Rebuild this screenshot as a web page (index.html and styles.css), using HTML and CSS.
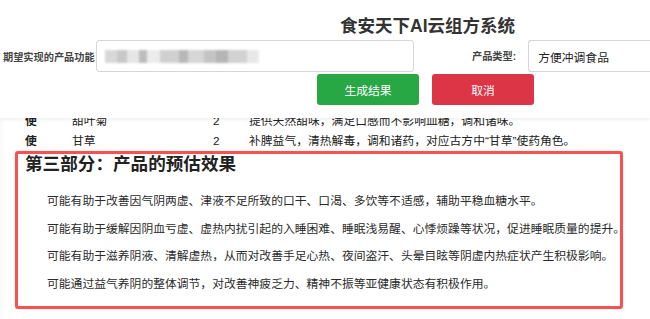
FILE: index.html
```html
<!DOCTYPE html>
<html lang="zh">
<head>
  <meta charset="utf-8"/>
  <title>食安天下AI云组方系统</title>
  <link rel="stylesheet" href="styles.css">
</head>
<body>

<div class="header">
  <h1 class="title">食安天下AI云组方系统</h1>
  <form class="query" onsubmit="event.preventDefault();">
    <label class="field-label" for="func">期望实现的产品功能</label>
    <div class="text-input" id="func"><span class="blurred"></span></div>
    <label class="field-label type-label" for="ptype">产品类型:</label>
    <div class="select-box" id="ptype">方便冲调食品</div>
  </form>
  <div class="actions">
    <button class="btn btn-go" type="button">生成结果</button>
    <button class="btn btn-cancel" type="button">取消</button>
  </div>
</div>

<div class="content">
  <div class="card">
    <table class="recipe">
      <tr><td class="role">使</td><td class="herb">甜叶菊</td><td class="qty">2</td><td>提供天然甜味，满足口感而不影响血糖，调和诸味。</td></tr>
      <tr><td class="role">使</td><td class="herb">甘草</td><td class="qty">2</td><td>补脾益气，清热解毒，调和诸药，对应古方中“甘草”使药角色。</td></tr>
    </table>

    <div class="effects">
      <h2>第三部分：产品的预估效果</h2>
      <p>可能有助于改善因气阴两虚、津液不足所致的口干、口渴、多饮等不适感，辅助平稳血糖水平。</p>
      <p>可能有助于缓解因阴血亏虚、虚热内扰引起的入睡困难、睡眠浅易醒、心悸烦躁等状况，促进睡眠质量的提升。</p>
      <p>可能有助于滋养阴液、清解虚热，从而对改善手足心热、夜间盗汗、头晕目眩等阴虚内热症状产生积极影响。</p>
      <p>可能通过益气养阴的整体调节，对改善神疲乏力、精神不振等亚健康状态有积极作用。</p>
    </div>
  </div>
</div>

</body>
</html>
```

FILE: styles.css
```css
body {
  margin: 0;
  background: #fafafa;
  font-family: 'Liberation Sans', 'Noto Sans CJK SC', sans-serif;
  color: #333;
  overflow: hidden;
}
.header {
  position: relative;
  z-index: 2;
  height: 118px;
  background: #fff;
  box-shadow: 0 2px 3px rgba(0, 0, 0, 0.06);
}
.title {
  margin: 0;
  padding: 13px 0 0 340px;
  height: 39px;
  box-sizing: border-box;
  font-size: 17.5px;
  font-weight: bold;
  color: #333;
  line-height: 26px;
}
.query {
  display: flex;
  align-items: center;
  height: 34px;
  padding-left: 3px;
}
.field-label {
  font-size: 10.2px;
  font-weight: bold;
  color: #444;
  width: 93px;
}
.type-label {
  width: auto;
  margin: -2px 12px 0 58px;
}
.text-input,
.select-box {
  height: 32px;
  box-sizing: border-box;
  border: 1px solid #d6d6d6;
  border-radius: 3px;
  background: #fff;
  display: flex;
  align-items: center;
}
.text-input {
  width: 318px;
  padding-left: 8px;
}
.blurred {
  display: block;
  width: 154px;
  height: 13px;
  background: linear-gradient(90deg, #d8d8d8 0 8%, #c8c8c8 8% 14%, #e6e6e6 14% 22%, #bdbdbd 22% 27%, #ececec 27% 36%, #d0d0d0 36% 48%, #b8b8b8 48% 54%, #d6d6d6 54% 64%, #c4c4c4 64% 72%, #b5b5b5 72% 80%, #d2d2d2 80% 92%, #e8e8e8 92% 100%);
  filter: blur(1.2px);
}
.select-box {
  flex: 1;
  margin-right: -4px;
  padding-left: 9px;
  font-size: 11.8px;
  color: #222;
  border-right: none;
}
.actions {
  display: flex;
  gap: 13px;
  padding: 1px 0 0 317px;
}
.btn {
  width: 102px;
  height: 31px;
  border: none;
  border-radius: 3px;
  color: #fff;
  font-family: inherit;
  font-size: 11.8px;
}
.btn-go {
  background: #28a745;
}
.btn-cancel {
  background: #dc3545;
}
.content {
  margin-top: -12px;
  padding-left: 3px;
}
.card {
  background: #fff;
  border-radius: 6px;
  padding: 5px 0 20px 0;
}
.recipe {
  border-collapse: collapse;
  margin-left: 22px;
  font-size: 11.8px;
  color: #222;
}
.recipe td {
  padding: 0;
  height: 20px;
  line-height: 20px;
  white-space: nowrap;
}
.recipe .role {
  width: 47px;
  font-weight: bold;
}
.recipe .herb {
  width: 141px;
}
.recipe .qty {
  width: 36px;
}
.effects {
  margin: 0 27px 0 12px;
  border: 3px solid #f95050;
  border-radius: 3px;
  padding: 0 0 7px 7px;
  box-shadow: 0 0 2px rgba(0, 0, 0, 0.12);
}
.effects h2 {
  margin: 0 0 14px;
  font-size: 17.6px;
  line-height: 20px;
  color: #222;
}
.effects p {
  margin: 0;
  padding-left: 22px;
  font-size: 11.8px;
  line-height: 27.7px;
  color: #2b2b2b;
  white-space: nowrap;
}
```
